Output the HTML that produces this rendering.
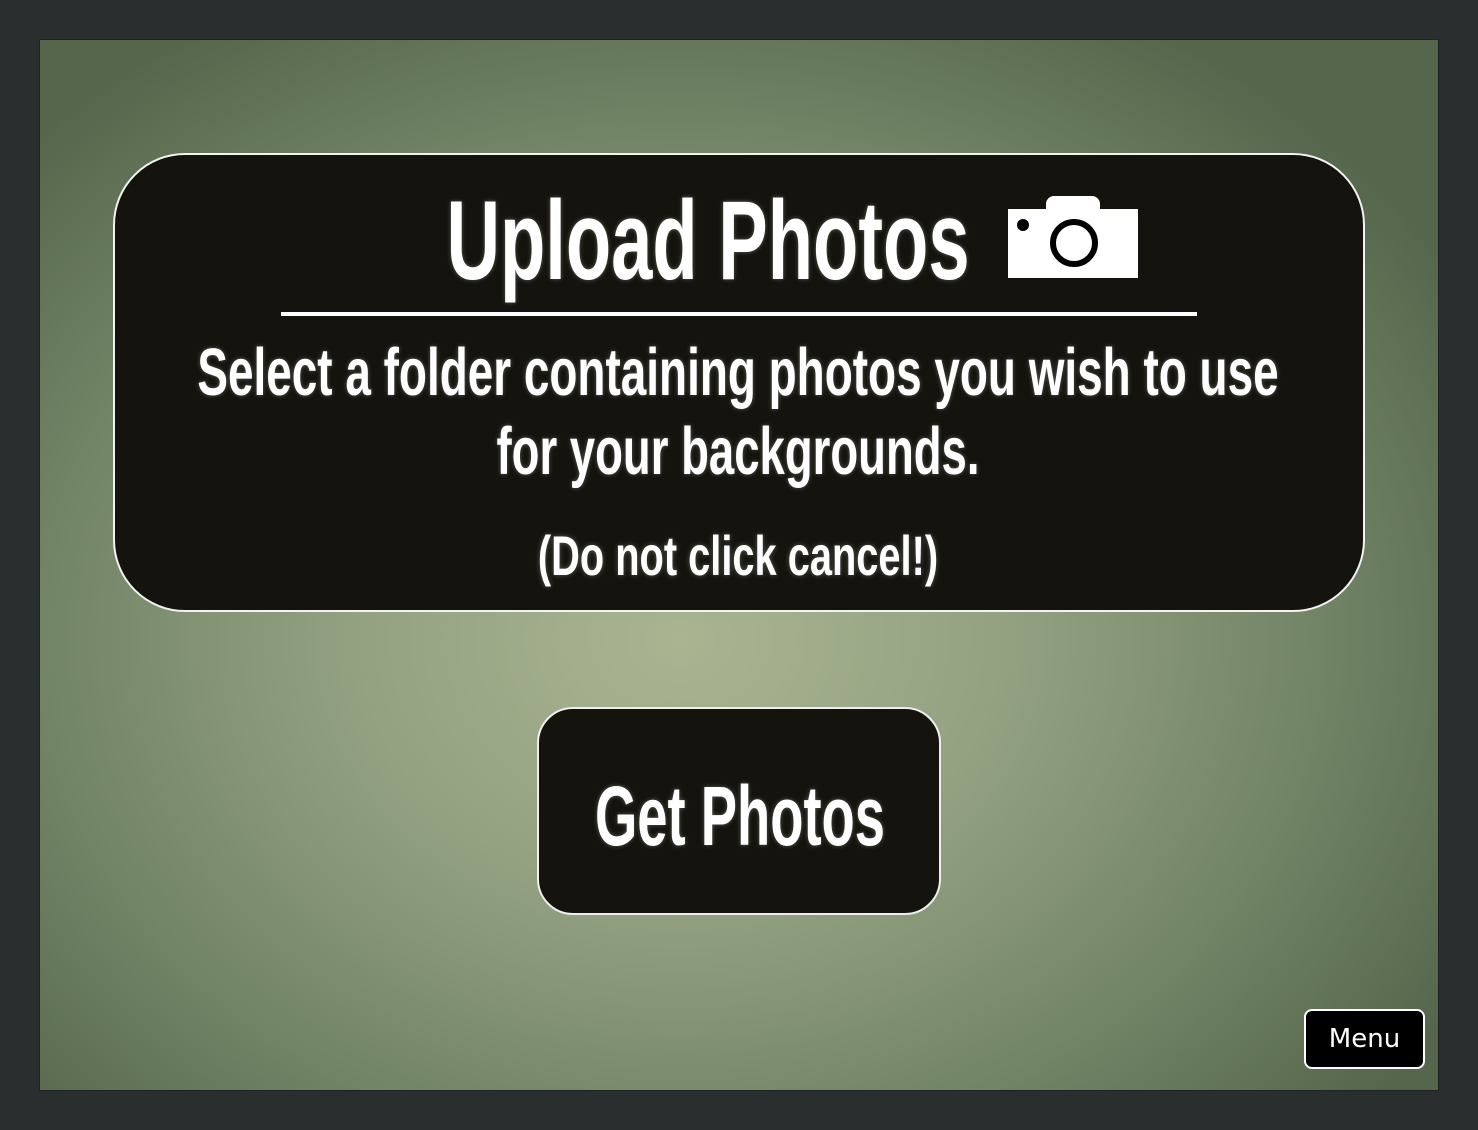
<!DOCTYPE html>
<html><head><style>
html,body{margin:0;padding:0;}
body{width:1478px;height:1130px;background:#2b2e2f;position:relative;overflow:hidden;font-family:"Liberation Sans",sans-serif;font-weight:bold;color:#fff;}
.bg{position:absolute;left:39px;top:39px;width:1398px;height:1050px;border:1px solid #1e2220;background:radial-gradient(ellipse 900px 720px at 640px 600px,#a9b491 0%,#94a282 35%,#738567 70%,#55664c 100%);}
.panel{position:absolute;left:113px;top:153px;width:1248px;height:455px;border:2px solid #f2f2f2;border-radius:72px;background:#14130d;}
.t{position:absolute;white-space:nowrap;line-height:1;transform-origin:50% 50%;transform:translateX(-50%) scaleX(0.64);text-shadow:0 0 6px rgba(255,255,255,.3);}
.btn{position:absolute;left:537px;top:707px;width:400px;height:204px;border:2px solid #eee;border-radius:36px;background:#14130d;}
.menu{position:absolute;left:1304px;top:1009px;width:117px;height:56px;border:2px solid #fff;border-radius:8px;background:#000;font-family:"DejaVu Sans","Liberation Sans",sans-serif;font-weight:normal;font-size:26px;line-height:56px;text-align:center;}
</style></head><body>
<div class="bg"></div>
<div class="panel"></div>
<span class="t" id="a" style="left:708px;top:185px;font-size:112px;">Upload Photos</span>
<svg style="position:absolute;left:1005px;top:193px" width="136" height="90" viewBox="1005 193 136 90">
<rect x="1008" y="209" width="130" height="69" fill="#fff"/>
<rect x="1046" y="196" width="54" height="20" rx="8" fill="#fff"/>
<circle cx="1074" cy="243" r="21" fill="none" stroke="#000" stroke-width="6"/>
<circle cx="1023" cy="225" r="6" fill="#000"/>
</svg>
<div style="position:absolute;left:281px;top:312px;width:916px;height:4px;background:#fff;"></div>
<span class="t" id="b" style="left:738px;top:339px;font-size:67px;">Select a folder containing photos you wish to use</span>
<span class="t" id="c" style="left:738px;top:418px;font-size:67px;">for your backgrounds.</span>
<span class="t" id="d" style="left:738px;top:528px;font-size:56px;">(Do not click cancel!)</span>
<div class="btn"></div>
<span class="t" id="e" style="left:740px;top:774px;font-size:84px;">Get Photos</span>
<div class="menu">Menu</div>
<script>
[["a",523],["b",1081],["c",483],["d",400],["e",290]].forEach(function(p){var el=document.getElementById(p[0]);var w=el.offsetWidth;if(w>0)el.style.transform="translateX(-50%) scaleX("+(p[1]/w)+")";});
</script>
</body></html>
